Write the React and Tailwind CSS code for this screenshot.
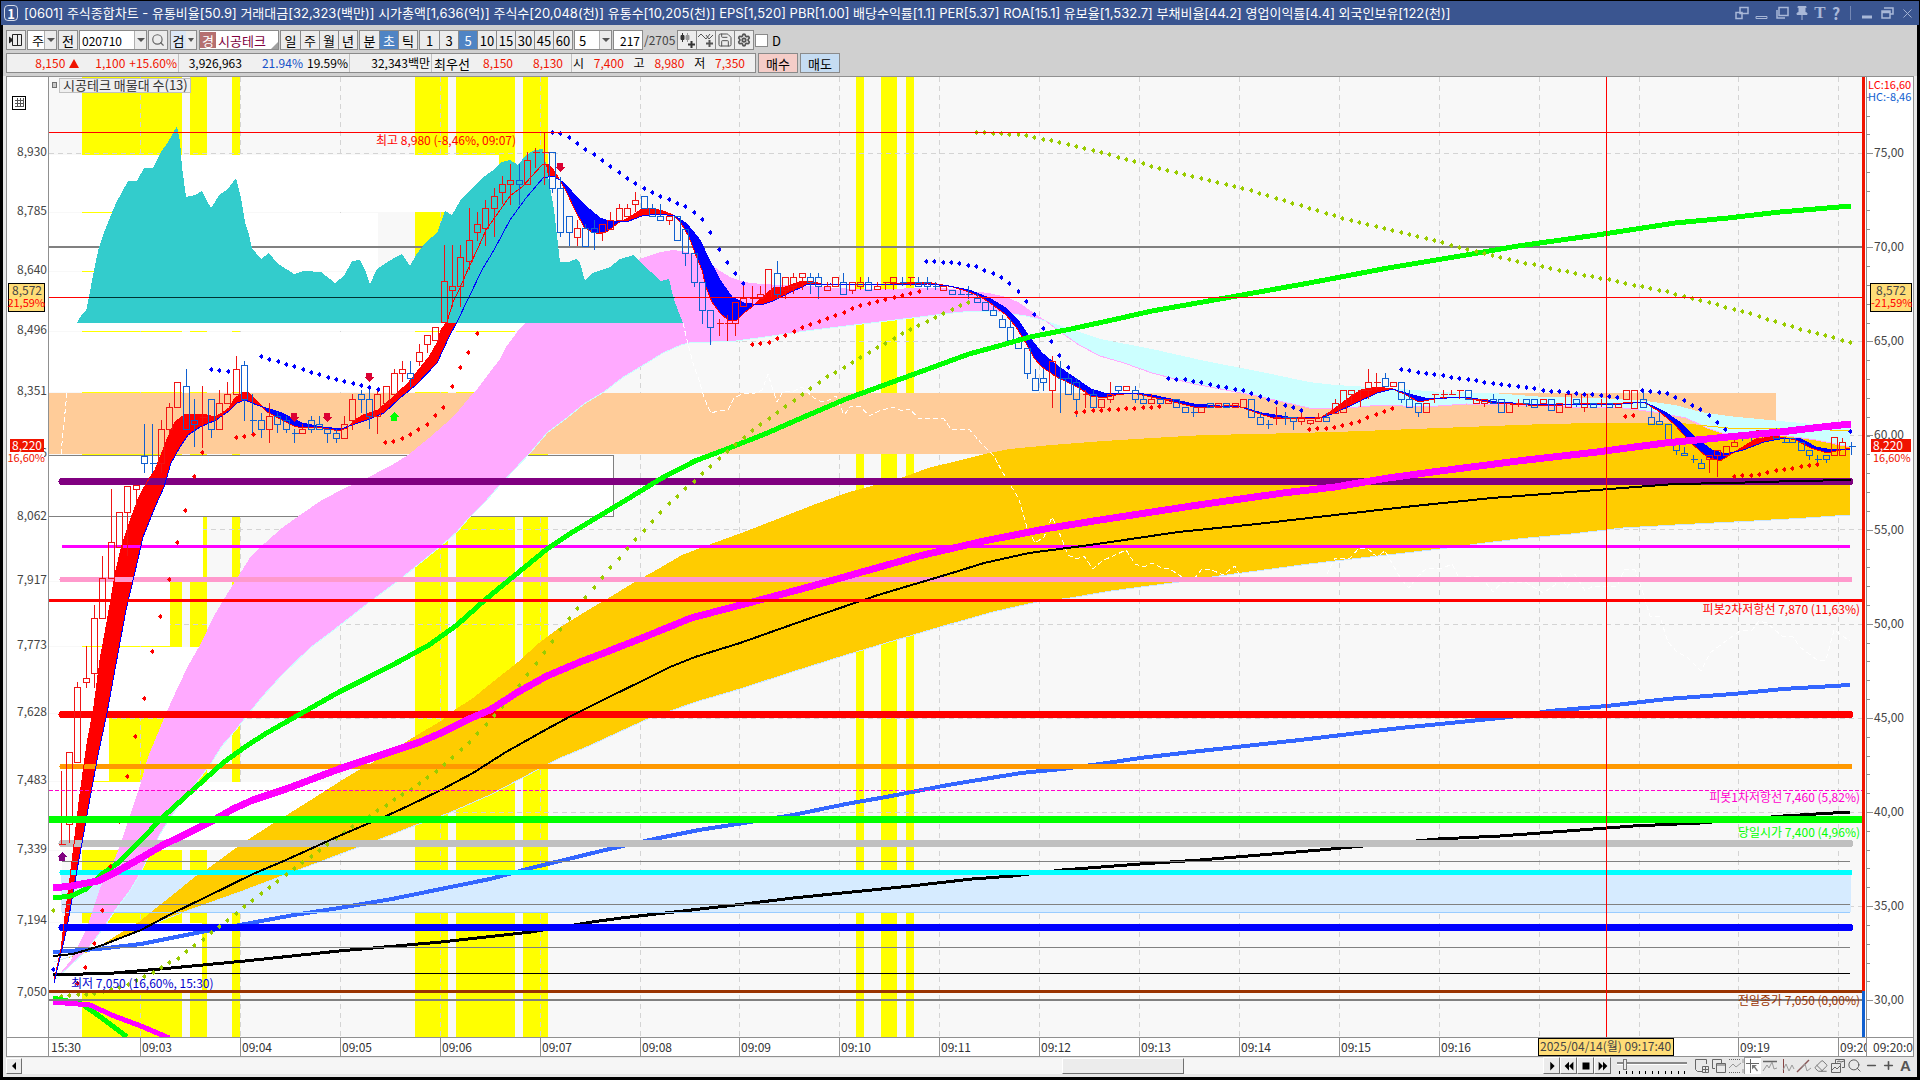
import { Search, Save, Settings, Pin, X, Minus, Plus, Eraser } from "lucide-react";
import clsx from "clsx";

const FONT = "font-['Noto_Sans_CJK_KR',sans-serif]";

/* ---------- chart data (svg user units) ---------- */

const BAR0 = 53;
const STEP = 8.325;

const YELLOW = [[82, 182], [190, 207], [232, 240], [415, 448], [456, 515], [523, 548], [856, 864], [881, 897], [906, 914]];

// volume profile rows: top, bottom, right edge
const PROFILE = [
  [155, 212, 499], [213, 271, 378], [272, 331, 530], [332, 392, 530],
  [517, 581, 203], [582, 646, 170], [647, 713, 250], [714, 781, 109],
  [782, 850, 330], [851, 922, 62], [923, 991, 202],
];

const PRICES = [
  ["8,930", 152], ["8,785", 211], ["8,640", 270], ["8,496", 330], ["8,351", 391], ["8,206", 453], ["8,062", 516],
  ["7,917", 580], ["7,773", 645], ["7,628", 712], ["7,483", 780], ["7,339", 849], ["7,194", 920], ["7,050", 992],
];

const TEAL =
  "77,323 82,314 86,311 89,297 94,270 99,247 105,230 111,215 116,203 122,192 128,181 137,181 144,168 153,168 161,152 168,142 177,126 180,142 182,167 186,197 195,195 202,191 207,201 211,208 220,194 227,190 236,178 241,198 245,222 249,235 252,248 261,259 269,253 277,263 294,274 304,271 321,272 335,283 344,276 352,261 360,260 365,270 370,284 377,269 386,263 394,258 402,254 410,266 416,255 426,242 437,233 445,211 452,215 460,201 471,189 482,178 492,171 502,162 510,160 518,165 526,155 535,150 543,149 547,170 554,210 560,262 569,262 576,259 580,263 585,281 592,273 610,267 620,259 634,255 640,262 661,281 669,279 674,300 683,323";

const GHOST =
  "683,323 687,340 693,363 700,383 704,398 711,413 718,411 728,410 734,398 744,393 755,393 762,390 768,374 772,387 777,402 783,391 794,391 802,387 814,398 822,402 829,400 836,396 844,415 851,406 861,407 869,416 879,411 893,407 902,411 910,409 918,418 944,419 951,429 969,429 981,443 993,455 1006,478 1019,499 1027,528 1035,543 1044,537 1052,517 1059,532 1068,555 1077,559 1084,556 1093,569 1102,561 1126,550 1135,564 1144,567 1152,563 1162,568 1170,569 1182,577 1194,579 1202,569 1210,569 1223,575 1235,566 1241,578 1325,578 1335,558 1350,558 1359,548 1367,548 1377,557 1385,551 1401,579 1409,588 1417,577 1427,568 1443,568 1452,564 1460,580 1468,576 1480,576 1493,592 1502,582 1525,582 1543,593 1555,585 1560,573 1567,588 1575,574 1585,591 1593,586 1617,586 1625,569 1635,570 1642,590 1650,616 1660,617 1668,642 1677,652 1687,657 1701,671 1710,653 1723,643 1740,631 1752,630 1759,621 1767,623 1782,636 1793,637 1800,647 1817,660 1826,660 1834,630 1850,641";

const PINK_TOP =
  "54,981 71,960 87,928 100,888 112,866 122,840 131,813 141,782 148,757 155,740 167,711 178,687 188,666 200,645 214,616 229,591 241,572 251,556 265,543 282,528 300,515 322,500 345,488 363,480 392,465 408,455 429,438 445,424 459,410 469,398 478,388 490,372 500,359 506,347 515,335 520,328 526,323 640,259 651,255 661,252 673,250 687,252 700,257 712,265 720,271 732,278 744,282 761,284 781,285 806,286 822,287 855,289 887,289 920,288 944,288 969,291 989,293 1006,297 1018,302 1034,313 1046,321";
const PINK_LOW =
  "54,981 86,951 102,930 114,912 131,889 141,872 153,847 163,829 175,811 188,794 200,778 210,765 222,746 235,731 249,713 263,696 282,675 310,648 339,626 367,604 398,581 424,560 441,546 457,532 469,518 486,501 500,485 514,470 531,452 547,433 563,421 584,404 604,392 622,378 642,366 663,353 681,345 693,342 712,342 736,341 765,337 806,331 846,326 887,321 920,317 953,313 973,311 989,311 1006,313 1026,316 1046,321";
const CYAN_TOP =
  "1046,321 1100,339 1152,349 1205,361 1257,371 1309,382 1335,385 1388,388 1440,392 1492,393 1545,397 1597,398 1639,400 1675,405 1701,412 1728,416 1759,419 1801,423 1850,428";
const CYAN_LOW =
  "1046,321 1059,331 1079,345 1100,356 1124,363 1152,373 1194,384 1231,391 1262,397 1283,402 1309,408 1335,409 1382,405 1424,407 1466,404 1518,405 1571,407 1623,408 1654,412 1686,418 1707,428 1722,433 1780,435 1816,440 1850,447";
const GOLD_TOP =
  "54,962 86,953 100,946 122,932 139,922 151,912 175,893 196,876 206,870 229,853 249,839 269,826 290,813 314,798 339,782 359,770 388,754 412,738 441,721 453,711 473,698 494,681 518,662 539,643 559,628 588,610 607,599 633,583 658,569 682,555 711,544 744,532 780,518 813,505 846,493 875,485 904,477 928,468 961,460 989,453 1010,449 1051,445 1104,441 1152,438 1205,435 1257,434 1335,432 1388,430 1440,428 1492,426 1545,424 1597,423 1675,423 1707,426 1728,428 1790,428 1850,431";
const GOLD_LOW =
  "54,962 102,946 139,931 163,920 184,912 240,892 298,870 322,861 359,847 378,840 416,825 449,813 490,795 539,769 560,758 589,746 617,733 650,718 670,711 699,701 740,689 789,673 846,655 886,643 940,627 993,612 1037,602 1070,598 1111,591 1172,583 1212,577 1257,571 1309,564 1361,558 1440,549 1477,544 1518,539 1571,534 1623,528 1675,525 1754,521 1806,518 1850,515";

const GREEN =
  "53,898 71,896 86,889 102,874 118,863 141,840 163,817 184,798 204,780 224,762 245,747 265,734 302,713 339,692 367,678 400,661 429,645 457,625 486,599 514,576 547,549 571,533 596,518 626,500 662,478 695,461 724,450 765,434 806,416 846,399 887,384 928,369 969,354 1002,345 1030,337 1071,329 1112,320 1152,311 1231,297 1309,283 1388,268 1466,255 1518,246 1597,235 1675,223 1728,218 1780,212 1851,206";
const MAGENTA =
  "53,888 71,886 98,881 118,871 141,858 163,845 180,837 212,821 233,809 253,800 286,789 339,769 375,757 420,742 441,733 469,719 490,710 518,692 547,676 580,662 604,653 642,638 691,618 756,601 805,588 862,572 919,556 984,541 1050,528 1100,520 1152,512 1205,504 1283,493 1335,487 1388,478 1440,471 1518,461 1597,452 1665,443 1728,437 1780,432 1822,427 1851,424";
const BLACK =
  "53,956 73,954 100,946 141,930 171,914 204,898 253,874 286,860 339,836 367,824 384,817 408,806 441,790 473,773 506,752 547,729 571,716 609,697 642,681 670,667 695,657 740,643 805,620 878,595 952,573 984,563 1029,553 1090,545 1131,539 1178,532 1257,524 1335,515 1414,506 1492,498 1571,492 1623,488 1675,484 1728,483 1796,481 1851,480";
const BLUE =
  "53,952 98,949 141,944 196,933 245,924 294,915 339,908 392,899 441,889 490,879 531,868 560,861 601,851 654,839 699,830 744,823 793,815 846,804 886,797 948,785 1021,773 1062,769 1107,763 1140,758 1200,751 1300,740 1400,728 1440,724 1510,717 1550,711 1607,706 1667,699 1733,694 1783,689 1850,685";
const BLACK_LOW =
  "53,975 114,973 171,968 245,961 339,951 441,942 531,932 592,922 621,918 674,912 744,904 793,898 862,891 911,886 972,879 1013,876 1062,870 1140,864 1200,860 1320,850 1438,839 1500,836 1567,831 1633,826 1700,823 1783,816 1850,812";

const FAST =
  "54,981 61,949 65,916 70,878 75,836 80,794 87,744 94,706 100,660 107,622 116,570 122,545 131,518 139,497 147,482 155,470 161,455 168,437 175,422 184,415 196,414 204,414 214,417 222,413 229,408 235,398 244,392 249,393 259,403 267,412 282,420 294,426 302,428 318,427 339,431 347,428 355,420 363,415 378,410 392,398 408,383 420,368 429,357 437,343 441,330 447,322 453,302 459,290 469,267 478,248 486,230 498,213 510,196 522,187 531,177 543,164 549,165 555,172 561,182 567,193 575,210 584,227 592,232 600,234 608,231 618,223 630,217 642,209 651,208 663,211 673,215 681,223 689,237 695,253 702,270 706,287 712,302 720,313 728,320 736,321 744,313 753,306 765,295 773,288 785,287 802,281 810,281 822,284 846,284 879,285 912,282 932,283 953,287 969,292 981,297 993,305 1006,315 1016,327 1026,343 1034,358 1042,367 1055,376 1067,382 1079,388 1091,396 1104,398 1116,395 1132,393 1152,397 1178,403 1194,407 1210,407 1236,405 1257,413 1273,418 1299,419 1320,418 1330,412 1346,400 1361,390 1377,387 1393,389 1406,395 1419,402 1440,398 1461,397 1492,403 1545,406 1597,403 1623,403 1644,402 1660,412 1675,425 1691,443 1707,457 1720,461 1733,453 1754,440 1775,436 1796,440 1811,448 1827,453 1850,448";
const SLOW =
  "54,983 67,928 77,870 84,832 90,798 98,755 107,713 116,664 126,610 135,572 143,537 155,507 164,487 171,463 180,447 188,435 200,427 216,420 229,411 237,403 245,400 257,405 282,413 302,423 322,427 341,429 355,424 367,420 384,413 400,398 416,385 437,363 449,337 457,322 469,297 482,270 494,250 510,220 526,198 543,178 553,176 563,182 575,195 588,208 600,218 612,222 629,221 642,216 659,214 675,216 687,224 700,240 708,257 720,280 732,297 744,303 761,305 773,301 789,293 806,285 830,284 887,285 928,284 949,286 969,290 989,298 1006,308 1018,320 1030,338 1042,353 1059,367 1075,378 1091,389 1104,393 1124,393 1144,394 1152,395 1194,404 1220,406 1241,407 1262,413 1288,417 1320,418 1335,413 1356,403 1377,393 1393,389 1409,394 1429,399 1466,397 1497,402 1545,405 1623,404 1644,402 1665,412 1681,423 1696,438 1712,450 1725,454 1743,450 1764,442 1785,438 1801,439 1816,447 1832,450 1850,449";

const SAR = [
  { color: "#0000ff", runs: ["53,969 53,969", "211,369 228,371", "261,356 294,366 327,377 378,389", "552,132 560,133 568,137 584,148 602,160 618,172 642,187 661,196 685,206 693,212 702,219 710,232 718,248 727,262 735,273 744,284", "926,261 951,262 975,266 1001,277 1010,283 1018,291 1026,301 1034,314 1043,329 1051,341 1059,355 1068,368", "1168,378 1184,379 1225,387 1244,390 1267,399 1284,405 1302,410", "1401,369 1466,379 1545,390 1619,397", "1642,390 1667,393 1683,400 1700,409 1709,415 1717,422 1726,430", "1850,431 1850,431"] },
  { color: "#ff0000", runs: ["77,983 86,966 94,942 102,910 127,776 136,733 144,696 152,651 161,613 169,577 177,542 186,507 194,474 203,449", "236,437 244,436 253,434", "385,442 394,441 410,434 427,424 435,415 444,406 452,385 460,367 469,351 478,330", "752,344 768,342 785,335 802,327 834,315 867,303 893,297 919,291", "1076,412 1093,410 1118,409 1160,406", "1309,429 1333,427 1359,421 1377,413 1393,408", "1625,416 1634,415", "1734,476 1759,474 1782,469 1818,464"] },
  { color: "#99cc00", runs: ["53,910 53,910", "61,996 94,993 118,988 136,980 152,972 177,958 202,939 227,920 260,894 294,868 344,832 385,805 410,789 435,772 469,742 502,706 535,664 568,619 602,577 635,539 668,504 702,473 743,437 768,418 802,394 826,377 860,357 893,338 928,320 951,309 969,302", "976,132 993,133 1026,135 1059,142 1093,150 1126,159 1152,166 1205,179 1257,192 1309,208 1361,223 1414,235 1456,246 1508,259 1560,270 1607,279 1665,291 1701,300 1749,313 1801,329 1851,342"] },
];

// colour, body top, body bottom, high, low
const CANDLES = `r 844 844 771 844|r 752 824 752 843|r 687 762 682 762|r 678 682 646 688|r 618 673 605 688|r 578 618 556 618|r 542 578 489 578|r 512 547 512 547|r 486 512 486 556|r 485 489 485 507
b 456 463 424 473|b 463 463 424 473|r 429 463 420 473|r 407 429 403 433|r 382 407 382 407|b 386 429 369 429|b 420 424 399 447|r 417 417 386 448|b 399 429 399 438|r 403 429 390 429
r 394 403 382 403|r 369 394 356 394|b 365 399 361 421|b 420 420 394 433|b 420 429 413 438|r 416 429 403 443|b 416 424 412 433|b 420 429 416 433|b 433 433 429 443|r 429 433 424 433
b 420 429 416 433|b 424 429 416 429|b 429 433 429 443|b 433 438 429 443|r 424 438 416 438|r 399 420 394 430|b 394 399 390 413|b 399 416 390 429|r 394 416 390 434|r 386 403 386 403
r 373 394 369 394|r 369 373 361 382|b 373 378 361 387|r 352 361 344 366|r 335 344 335 353|r 327 340 327 340|r 281 322 245 322|r 286 290 245 307|r 257 286 245 307|r 240 261 208 270
r 224 232 212 241|r 208 228 200 246|r 196 208 188 237|r 184 192 176 204|r 180 184 164 205|b 180 184 164 205|r 160 184 152 184|r 152 152 148 168|r 152 152 132 185|b 152 188 152 193
b 188 232 177 237|b 216 232 216 246|r 228 237 220 246|b 228 246 224 246|b 228 232 220 250|r 224 232 224 241|r 220 229 212 229|r 208 220 204 220|r 208 216 204 216|r 200 204 192 212
b 196 208 196 208|b 208 216 204 216|b 216 220 204 220|r 216 220 216 225|b 216 240 216 240|b 229 253 229 266|b 253 282 253 287|b 282 310 282 324|b 310 327 310 345|r 323 323 319 336
r 323 323 315 341|r 302 323 302 336|r 298 306 285 306|r 298 298 286 307|r 294 298 286 298|r 269 297 269 297|b 273 294 261 299|r 277 290 277 299|r 277 286 273 294|r 273 277 273 290
b 277 282 273 294|b 277 286 273 299|r 286 290 282 290|r 277 286 277 286|b 282 294 273 294|r 282 290 282 294|r 282 286 277 290|b 282 290 277 290|r 286 289 282 289|r 282 282 282 290
r 277 282 277 290|b 282 282 277 286|r 277 277 277 286|b 282 286 277 286|b 282 286 277 290|b 286 286 282 290|r 286 290 286 290|b 290 294 290 294|b 294 294 290 294|b 294 294 286 299
b 298 302 293 302|b 302 310 302 310|b 310 315 306 315|b 319 327 315 327|b 327 340 319 340|b 340 348 337 348|b 348 373 348 379|b 378 390 369 390|b 378 382 369 391|r 361 390 356 408
b 378 378 361 413|b 378 394 373 394|b 382 399 378 417|r 394 394 390 408|b 394 407 390 407|r 399 407 399 407|r 394 399 382 403|b 386 390 386 394|r 386 390 386 390|b 390 399 386 403
b 399 403 394 403|r 399 403 394 403|b 399 403 399 403|r 399 403 399 403|b 399 407 399 407|b 407 412 407 412|b 412 412 407 417|r 407 412 407 412|b 403 407 403 407|r 403 407 403 407
b 403 407 403 407|r 403 407 403 407|r 399 407 399 407|b 399 417 399 417|b 417 424 412 424|b 424 424 420 429|r 417 417 407 425|b 417 417 412 425|b 417 421 417 430|r 417 421 412 425
r 420 423 420 425|r 417 421 413 421|b 417 421 413 421|r 403 413 399 413|r 390 412 390 412|r 390 394 390 403|r 390 390 390 407|r 382 390 369 399|r 382 382 373 390|b 378 386 373 386
r 382 386 382 386|b 382 399 382 403|b 399 407 390 407|b 403 412 403 417|r 403 412 403 412|r 394 394 394 403|r 394 394 390 399|r 394 394 390 394|r 390 390 390 399|b 390 399 390 399
r 399 403 399 403|r 399 403 399 407|b 399 403 394 403|b 399 412 399 412|r 403 412 403 412|r 403 403 399 407|b 399 403 399 407|b 399 407 399 407|r 399 403 399 403|b 399 410 399 410
r 403 412 403 412|r 394 407 394 407|b 399 403 399 407|r 394 407 394 412|b 403 407 403 407|r 403 403 399 407|b 403 407 403 407|r 403 407 403 407|r 390 399 390 399|r 390 408 390 408
b 399 407 390 407|b 417 424 407 424|b 421 424 412 424|b 424 442 424 442|b 442 450 442 455|b 453 455 447 455|b 459 459 455 463|b 463 468 459 468|r 455 459 455 473|r 450 455 450 477
r 446 455 446 455|r 442 446 433 446|b 433 437 433 441|b 437 437 433 441|r 430 438 430 438|r 430 434 430 434|b 433 438 428 438|b 442 442 437 442|b 438 442 438 442|b 442 450 442 450
b 450 455 450 460|b 459 459 455 463|b 455 459 455 463|r 437 455 437 455|r 442 455 438 455|b 446 446 442 455`
  .split(/[|\n]/)
  .map((row, i) => {
    const [tone, ...ys] = row.trim().split(" ");
    const [top, bottom, high, low] = ys.map(Number);
    return { x: Math.round(BAR0 + STEP * (i + 1) - 0.5) + 0.5, tone, top, bottom, high, low };
  });

const LEVELS = [
  [481.5, 7, "#800080"], [546.5, 3, "#ff00ff"], [579.5, 5, "#ff99cc"], [714.5, 7, "#ff0000"],
  [766.5, 5, "#ff9900"], [843.5, 7, "#c0c0c0"], [861.5, 1, "#808080"], [872.5, 5, "#00ffff"],
  [904.5, 1, "#808080"], [912.5, 1, "#99ccff"], [927.5, 7, "#0000ff"], [947.5, 1, "#808080"], [973.5, 1, "#000000"],
];

const parse = (s) => s.split(" ").map((p) => p.split(",").map(Number));

const at = (pts, x) => {
  const i = pts.findIndex((p) => p[0] >= x);
  if (i <= 0) return i === 0 ? pts[0][1] : pts[pts.length - 1][1];
  const [x0, y0] = pts[i - 1];
  const [x1, y1] = pts[i];
  return y0 + ((y1 - y0) * (x - x0)) / (x1 - x0);
};

const area = (a, b) => a + " " + b.split(" ").reverse().join(" ");

const dots = (run) => {
  const pts = parse(run);
  const out = [];
  for (let x = pts[0][0]; x <= pts[pts.length - 1][0] + 1; x += STEP) {
    out.push([Math.round(x) + 0.5, Math.round(at(pts, x)) + 0.5]);
  }
  return out;
};

const ribbon = () => {
  const f = parse(FAST);
  const s = parse(SLOW);
  let up = "";
  let down = "";
  for (let x = 54; x < 1850; x += 2) {
    const quad = `M${x} ${at(f, x)}L${x + 2} ${at(f, x + 2)}V${at(s, x + 2)}L${x} ${at(s, x)}Z`;
    if (at(f, x + 1) < at(s, x + 1)) up += quad;
    else down += quad;
  }
  return { up, down };
};

const RIBBON = ribbon();

// the time cursor sits over these two labels
const COVERED = [14, 15];

/* ---------- chart ---------- */

function Line({ points, color, width = 1, ...rest }) {
  return <polyline points={points} fill="none" stroke={color} strokeWidth={width} {...rest} />;
}

function Arrow({ x, y, color, up }) {
  return (
    <path
      fill={color}
      d={up ? `M${x} ${y - 5}l5 5h-2v4h-6v-4h-2z` : `M${x} ${y + 5}l5 -5h-2v-4h-6v4h-2z`}
    />
  );
}

function Chart() {
  return (
    <svg
      viewBox="6 76 1908 981"
      preserveAspectRatio="none"
      shapeRendering="crispEdges"
      className={clsx("block h-full w-full text-[12px]", FONT)}
    >
      <defs>
        <clipPath id="plot"><rect x="49" y="77" width="1813" height="960" /></clipPath>
        <clipPath id="right"><rect x="1867" y="77" width="46" height="980" /></clipPath>
        <clipPath id="time"><rect x="49" y="1037" width="1817" height="20" /></clipPath>
      </defs>
      <rect x="6" y="76" width="1908" height="981" fill="#fff" />
      <rect x="49" y="76" width="1814" height="961" fill="#f8f8f8" />

      <g clipPath="url(#plot)">
        {YELLOW.map(([a, b]) => (
          <rect key={a} x={a} y="77" width={b - a} height="960" fill="#ffff00" />
        ))}
        <g stroke="#d4d4d4" strokeDasharray="5 4">
          {Array.from({ length: 18 }, (_, i) => (
            <line key={i} x1={140.5 + i * 99.9} x2={140.5 + i * 99.9} y1="77" y2="1037" />
          ))}
          {Array.from({ length: 10 }, (_, i) => (
            <line key={i} y1={153.5 + i * 94.1} y2={153.5 + i * 94.1} x1="49" x2="1862" />
          ))}
        </g>
        {PROFILE.map(([top, bottom, right]) => (
          <rect key={top} x="49" y={top} width={right - 49} height={bottom - top} fill="#fff" />
        ))}
        <rect x="49" y="393" width="1727" height="61" fill="#ffcc99" />
        <rect x="48.5" y="455.5" width="565" height="61" fill="#fff" stroke="#808080" />
        <rect x="61" y="872" width="1790" height="40" fill="#d6ebff" />
        <line x1="49" x2="1862" y1="247" y2="247" stroke="#808080" strokeWidth="2" />

        <polygon points={area(GOLD_TOP, GOLD_LOW)} fill="#ffcc00" />
        <Line points={GOLD_LOW} color="#cce6ff" />
        <polygon points={area(PINK_TOP, PINK_LOW)} fill="#ffaaff" />
        <Line points={PINK_LOW} color="#ccffff" />
        <polygon points={area(CYAN_TOP, CYAN_LOW)} fill="#ccffff" />
        <Line points={CYAN_LOW} color="#ffaaff" />
        <Line points="1675,423 1707,426 1728,428 1790,428 1850,431" color="#ffcc00" />

        <path d={RIBBON.up} fill="#ff0000" />
        <path d={RIBBON.down} fill="#0000ff" />
        <polygon points={TEAL} fill="#33cccc" />
        <Line points={GHOST} color="#fff" strokeDasharray="5 3" />
        <Line points="61,454 67,392" color="#fff" strokeDasharray="5 3" />

        <Line points={BLACK_LOW} color="#000" width={3} />
        <Line points={BLUE} color="#3366ff" width={4} />
        {LEVELS.map(([y, w, color]) => (
          <line key={y} x1="62" x2="1850" y1={y} y2={y} stroke={color} strokeWidth={w} strokeLinecap={w > 3 ? "round" : "butt"} />
        ))}
        <Line points={FAST} color="#ff0000" />
        <Line points={SLOW} color="#0000ff" />
        {CANDLES.map((c) => {
          const color = c.tone === "r" ? "#f01414" : "#1060d0";
          return (
            <g key={c.x} stroke={color} fill="none">
              <path d={`M${c.x} ${c.high}V${c.top}M${c.x} ${c.bottom}V${c.low}`} />
              {c.top === c.bottom ? (
                <path d={`M${c.x - 3} ${c.top + 0.5}h7`} />
              ) : (
                <rect x={c.x - 3} y={c.top + 0.5} width="6" height={c.bottom - c.top} />
              )}
            </g>
          );
        })}
        <Line points={GREEN} color="#00ff00" width={5} />
        {SAR.map(({ color, runs }) =>
          runs.map((run) =>
            dots(run).map(([x, y]) => <ellipse key={`${x},${y}`} cx={x} cy={y} rx="2" ry="2.2" fill={color} />)
          )
        )}
        <Line points={MAGENTA} color="#ff00ff" width={7} />
        <Line points={BLACK} color="#000" width={2} />
        <Line points="53,998 82,1004 102,1018 127,1037" color="#00ff00" width={5} />
        <Line points="53,1002 90,1005 114,1016 141,1026 169,1038" color="#ff00ff" width={5} />

        <line x1="49" x2="1862" y1="132.5" y2="132.5" stroke="#ff0000" />
        <line x1="49" x2="1862" y1="600.5" y2="600.5" stroke="#ff0000" strokeWidth="3" />
        <line x1="49" x2="1862" y1="790.5" y2="790.5" stroke="#ff00cc" strokeDasharray="4 2" />
        <line x1="49" x2="1862" y1="819.5" y2="819.5" stroke="#00ff00" strokeWidth="7" />
        <line x1="49" x2="1862" y1="991.5" y2="991.5" stroke="#993300" strokeWidth="3" />
        <line x1="49" x2="1862" y1="1000" y2="1000" stroke="#808080" strokeWidth="2" />

        <Arrow x={294} y={417} color="#dc0032" />
        <Arrow x={327} y={417} color="#dc0032" />
        <Arrow x={369} y={377} color="#dc0032" />
        <Arrow x={560} y={167} color="#dc0032" />
        <Arrow x={394} y={417} color="#00ff00" up />
        <Arrow x={62} y={857} color="#800080" up />

        <line x1="49" x2="1862" y1="297.5" y2="297.5" stroke="#ff0000" />
        <line x1="89" x2="675" y1="297.5" y2="297.5" stroke="#003333" />
        <line x1="1606.5" x2="1606.5" y1="77" y2="1037" stroke="#ff0000" />

        <text x="376" y="145" fill="#ff0000">최고 8,980 (-8,46%, 09:07)</text>
        <text x="71" y="988" fill="#0000cc">최저 7,050 (16,60%, 15:30)</text>
        <g textAnchor="end">
          <text x="1860" y="614" fill="#ff0000">피봇2차저항선 7,870 (11,63%)</text>
          <text x="1860" y="802" fill="#ff00cc">피봇1차저항선 7,460 (5,82%)</text>
          <text x="1860" y="837" fill="#00ff00">당일시가 7,400 (4,96%)</text>
          <text x="1860" y="1005" fill="#993300">전일종가 7,050 (0,00%)</text>
        </g>

        <rect x="52.5" y="82.5" width="4" height="5" fill="#c8c8c8" stroke="#707070" />
        <rect x="59.5" y="78.5" width="131" height="14" fill="#f0f0f0" stroke="#c0c0c0" />
        <text x="63" y="90" fill="#333" className="text-[13px]">시공테크 매물대 수(13)</text>
      </g>

      {/* left price scale */}
      <g fill="none" stroke="#000">
        <rect x="12.5" y="96.5" width="13" height="13" strokeWidth="1" />
        <path d="M15 100h9M15 103h9M15 106h9M17 98v9M20 98v9M23 98v9" stroke="#555" />
      </g>
      {PRICES.map(([label, y]) => (
        <text key={label} x="47" y={y + 4} textAnchor="end" fill="#444">{label}</text>
      ))}
      <rect x="10" y="439" width="34" height="13" fill="#f01400" />
      <rect x="8" y="452" width="36" height="13" fill="#fff" />
      <rect x="8.5" y="283.5" width="36" height="28" fill="#ffdd77" stroke="#000" />
      <text x="12" y="450" fill="#fff">8,220</text>
      <text x="12" y="295" fill="#444">8,572</text>
      <g className="text-[11px]" textAnchor="end">
        <text x="45" y="462" fill="#f01400">16,60%</text>
        <text x="45" y="307" fill="#ff0000">21,59%</text>
      </g>

      {/* right oscillator scale */}
      {Array.from({ length: 50 }, (_, i) => (
        <path key={i} d={`M1867 ${Math.round(1037 - 18 - i * 18.82) + 0.5}h3`} stroke="#909090" />
      ))}
      {Array.from({ length: 10 }, (_, i) => {
        const y = Math.round(1000 - i * 94.1);
        return (
          <g key={i}>
            <path d={`M1867 ${y + 0.5}h6`} stroke="#909090" />
            <text x="1874" y={y + 4} fill="#444">{`${30 + i * 5},00`}</text>
          </g>
        );
      })}
      <rect x="1871" y="439" width="40" height="13" fill="#f01400" />
      <rect x="1871" y="452" width="40" height="12" fill="#fff" />
      <rect x="1870.5" y="283.5" width="41" height="28" fill="#ffdd77" stroke="#000" />
      <g clipPath="url(#right)">
        <g className="text-[11px]">
          <text x="1868" y="89" fill="#ff0000">LC:16,60</text>
          <text x="1868" y="101" fill="#1060d0">HC:-8,46</text>
          <text x="1871" y="307" fill="#ff0000">-21,59%</text>
          <text x="1873" y="462" fill="#f01400">16,60%</text>
        </g>
        <text x="1876" y="295" fill="#444">8,572</text>
        <text x="1873" y="450" fill="#fff">8,220</text>
        <text x="1873" y="1052" fill="#333">09:20:0</text>
      </g>
      <rect x="1862" y="77" width="3" height="914" fill="#f01400" />
      <rect x="1862" y="991" width="3" height="46" fill="#1060d0" />

      {/* time scale */}
      <g clipPath="url(#time)" fill="#333">
        <text x="51" y="1052">15:30</text>
        {Array.from({ length: 18 }, (_, i) => (
          <g key={i}>
            <path d={`M${Math.round(140 + i * 99.9) + 0.5} 1037v19`} stroke="#909090" />
            {!COVERED.includes(i) && (
              <text x={Math.round(142 + i * 99.9)} y="1052">{`09:${String(i + 3).padStart(2, "0")}`}</text>
            )}
          </g>
        ))}
      </g>
      <rect x="1538.5" y="1038.5" width="135" height="17" fill="#ffdd77" stroke="#000" />
      <text x="1540" y="1051" fill="#444">2025/04/14(월) 09:17:40</text>

      <path
        d="M6 76.5H1914M6 1037.5H1914M6 1056.5H1914M6.5 76V1057M48.5 76V1057M1866.5 76V1057M1913.5 76V1057"
        stroke="#909090"
        fill="none"
      />
    </svg>
  );
}

/* ---------- title bar ---------- */

function GlyphButton({ label, children }) {
  return (
    <button aria-label={label} className="flex h-4 w-5 items-center justify-center">
      <svg viewBox="0 0 14 14" className="size-3.5" fill="none" stroke="currentColor" strokeWidth="1.5">{children}</svg>
    </button>
  );
}

function TitleBar() {
  return (
    <header className="mx-px flex h-6 shrink-0 items-center bg-[#3a5590] pl-[3px] text-[13px] text-white">
      <span className="mr-1.5 flex h-4 w-3.5 items-center justify-center rounded-sm border border-white/80 text-[13px] leading-none font-bold">1</span>
      <h1 className="flex-1 truncate font-['Inter','Noto_Sans_CJK_KR',sans-serif] text-[13px] leading-6">
        [0601] 주식종합차트 - 유통비율[50.9] 거래대금[32,323(백만)] 시가총액[1,636(억)] 주식수[20,048(천)] 유통수[10,205(천)] EPS[1,520] PBR[1.00] 배당수익률[1.1] PER[5.37] ROA[15.1] 유보율[1,532.7] 부채비율[44.2] 영업이익률[4.4] 외국인보유[122(천)]
      </h1>
      <div className="flex items-center pr-0.5 text-[#a9b8d8]">
        <GlyphButton label="창 분리"><path d="M5 1.5h8v6H5zM1 6.5h6v6H1z" /></GlyphButton>
        <GlyphButton label="접기"><path d="M1 10.5h11v2h-11z" strokeWidth="1" /></GlyphButton>
        <GlyphButton label="복사"><path d="M4 1.5h9v8H4zM2 4v8h8" /></GlyphButton>
        <GlyphButton label="고정"><path d="M3 0.5h8v1l-1 1v3l2 2v1H2v-1l2-2v-3l-1-1zM7 8v6" fill="currentColor" strokeWidth="1" /></GlyphButton>
        <button aria-label="글꼴" className="w-4 font-['Liberation_Serif',serif] text-[17px] leading-4 font-bold">T</button>
        <button aria-label="도움말" className="w-4 text-[16px] leading-4 font-bold">?</button>
        <span className="mx-1.5 h-3.5 w-px bg-[#7588b4]" />
        <GlyphButton label="최소화"><path d="M2 11h10" strokeWidth="3" /></GlyphButton>
        <GlyphButton label="이전 크기"><path d="M4 2h9v6h-3M2 5h8v7H2zM2 6.5h8" /></GlyphButton>
        <button aria-label="닫기" className="flex w-5 justify-center"><X size={15} strokeWidth={1.5} /></button>
      </div>
    </header>
  );
}

/* ---------- toolbar ---------- */

const tool = "flex h-5 items-center justify-center border border-[#8a8a8a] bg-[#ececec]";

function Combo({ label, value, className }) {
  return (
    <div className={clsx("relative h-5 border border-[#8a8a8a] bg-white", className)}>
      <select aria-label={label} className="h-full w-full appearance-none pl-1 pr-3 leading-none outline-none">
        <option>{value}</option>
      </select>
      <span className="pointer-events-none absolute inset-y-0 right-0 flex w-3 items-center justify-center border-l border-[#b0b0b0] bg-[#ececec]">
        <i className="border-x-[4px] border-t-[4px] border-x-transparent border-t-[#555]" />
      </span>
    </div>
  );
}

function Segments({ items, active }) {
  return (
    <div className="flex h-5 border border-[#8a8a8a]">
      {items.map((item, i) => (
        <button
          key={item}
          className={clsx(
            "flex w-[19px] items-center justify-center",
            i > 0 && "border-l border-[#8a8a8a]",
            item === active ? "bg-[#4f84c4] text-white" : "bg-[#ececec]"
          )}
        >
          {item}
        </button>
      ))}
    </div>
  );
}

function Toolbar() {
  return (
    <div className="flex h-5 items-center gap-px px-[3px] text-[13px] leading-none">
      <button aria-label="패널" className={clsx(tool, "w-5")}>
        <svg viewBox="0 0 14 14" className="size-3.5" fill="none" stroke="#222"><path d="M3.5 1.5h9v11h-9zM8.5 1.5v11" /><path d="M0 4l4 3-4 3z" fill="#222" /></svg>
      </button>
      <Combo label="구분" value="주" className="w-[30px]" />
      <button className={clsx(tool, "w-5")}>전</button>
      <div className="flex h-5 w-[68px] items-center border border-[#8a8a8a] bg-white">
        <input aria-label="종목코드" defaultValue="020710" className="w-[54px] pl-0.5 text-[12px] outline-none" />
        <span className="flex h-full flex-1 items-center justify-center border-l border-[#b0b0b0] bg-[#ececec]">
          <i className="border-x-[4px] border-t-[4px] border-x-transparent border-t-[#555]" />
        </span>
      </div>
      <button aria-label="종목 검색" className={clsx(tool, "w-5 text-[#666]")}><Search size={14} strokeWidth={2} /></button>
      <button className={clsx(tool, "ml-px w-[27px]")}>
        <span className="flex h-full flex-1 items-center justify-center bg-[#dce8f6]">검</span>
        <span className="flex w-2.5 justify-center"><i className="border-x-[3px] border-t-[4px] border-x-transparent border-t-[#555]" /></span>
      </button>
      <div className="relative ml-px flex h-5 w-[80px] items-center border border-[#8a8a8a] bg-white text-[#800040]">
        <span className="mr-0.5 flex h-4 w-4 items-center justify-center bg-[#b57070] text-[13px] text-white">경</span>
        시공테크
        <i className="absolute right-0 bottom-0 border-b-[7px] border-l-[7px] border-b-[#a0a0a0] border-l-transparent" />
      </div>
      <Segments items={["일", "주", "월", "년"]} />
      <Segments items={["분", "초", "틱"]} active="초" />
      <Segments items={["1", "3", "5", "10", "15", "30", "45", "60"]} active="5" />
      <Combo label="주기" value="5" className="w-[38px]" />
      <input aria-label="조회 봉수" defaultValue="217" className="h-5 w-[30px] border border-[#8a8a8a] bg-white pr-0.5 text-right text-[12px] outline-none" />
      <span className="w-8 text-[12px] text-[#444]">/2705</span>
      <div className="flex">
        <button aria-label="차트 추가" className={clsx(tool, "w-5")}>
          <svg viewBox="0 0 16 16" className="size-4" stroke="#333" fill="#333"><path d="M3.5 1v9M2 3.5h3v4H2z" /><path d="M8.5 1v9M7 3.5h3v4H7z" stroke="#999" fill="#999" /><path d="M12.5 9v7M9 12.5h7" strokeWidth="2" /></svg>
        </button>
        <button aria-label="지표 추가" className={clsx(tool, "-ml-px w-5")}>
          <svg viewBox="0 0 16 16" className="size-4" stroke="#555" fill="none"><path d="M0 5l3-3 5 5 4-5M8 3l3 4 4-4" /><path d="M11.5 8v7M8 11.5h7" strokeWidth="2" /></svg>
        </button>
        <button aria-label="저장" className={clsx(tool, "-ml-px w-5 text-[#555]")}><Save size={16} strokeWidth={1.5} /></button>
        <button aria-label="설정" className={clsx(tool, "-ml-px w-5 text-[#555]")}><Settings size={14} strokeWidth={3} /></button>
      </div>
      <label className="flex items-center gap-1">
        <input type="checkbox" className="size-[13px] appearance-none border border-[#8a8a8a] bg-white" />
        D
      </label>
    </div>
  );
}

function QuoteBar() {
  return (
    <div className="flex h-5 items-center gap-0.5 px-[3px] text-[12px] leading-none">
      <div className="flex h-5 w-[750px] items-center border border-[#8a8a8a] bg-[#f0f0f0] whitespace-pre">
        <div className="flex h-full w-[172px] items-center justify-end gap-1 border-r border-[#c0c0c0] pr-px text-[#f01400]">
          <span>8,150</span>
          <i className="mr-3 border-x-[5px] border-b-[9px] border-x-transparent border-b-[#f01400]" />
          <span>1,100</span>
          <span>+15.60%</span>
        </div>
        <div className="flex h-full w-[171px] items-center justify-end gap-1 border-r border-[#c0c0c0] pr-px">
          <span className="mr-4">3,926,963</span>
          <span className="text-[#1450c8]">21.94%</span>
          <span>19.59%</span>
        </div>
        <div className="flex h-full w-[82px] items-center justify-end border-r border-[#c0c0c0] pr-px">32,343백만</div>
        <div className="flex h-full w-[140px] items-center border-r border-[#c0c0c0] pl-0.5">
          <span className="flex-1 text-[13px]">최우선</span>
          <span className="mr-5 text-[#f01400]">8,150</span>
          <span className="mr-2 text-[#f01400]">8,130</span>
        </div>
        <dl className="flex flex-1 items-center justify-between pr-2.5 pl-px">
          <dt>시</dt><dd className="text-[#f01400]">7,400</dd>
          <dt>고</dt><dd className="text-[#f01400]">8,980</dd>
          <dt>저</dt><dd className="text-[#f01400]">7,350</dd>
        </dl>
      </div>
      <button className="h-5 w-10 border border-[#8a8a8a] bg-[#f5cdc8] text-[13px]">매수</button>
      <button className="h-5 w-10 border border-[#8a8a8a] bg-[#c5dcf2] text-[13px]">매도</button>
    </div>
  );
}

/* ---------- bottom strip ---------- */

const raised = "border border-t-white border-l-white border-r-[#707070] border-b-[#707070] bg-[#ececec]";

function IconTool({ label, pressed, children }) {
  return (
    <button aria-label={label} className={clsx("flex h-[17px] w-[17px] items-center justify-center", pressed && "border-t border-l border-[#999] bg-white")}>
      <svg viewBox="0 0 16 16" className="size-4" fill="none" stroke="#666">{children}</svg>
    </button>
  );
}

function BottomBar() {
  return (
    <div className="flex h-[17px] shrink-0 items-center">
      <button aria-label="왼쪽으로" className={clsx("flex h-4 w-4 items-center justify-center", raised)}>
        <i className="border-y-[4px] border-r-[4px] border-y-transparent border-r-black" />
      </button>
      <div className="h-4 flex-1 bg-[#f6f6f6]">
        <div className={clsx("ml-[68.4%] h-4 w-[8%]", raised)} />
      </div>
      {[
        ["재생", "M6 3v10l5-5z"],
        ["되감기", "M8 3v10L3 8zM13 3v10L8 8z"],
        ["정지", "M4 4h8v8H4z"],
        ["빨리감기", "M3 3v10l5-5zM8 3v10l5-5z"],
      ].map(([label, d]) => (
        <button key={label} aria-label={label} className={clsx("flex h-[17px] w-[17px] items-center justify-center", raised)}>
          <svg viewBox="0 0 16 16" className="size-3.5"><path d={d} fill="#000" /></svg>
        </button>
      ))}
      <label className="relative mx-1.5 block h-4 w-[70px]">
        <svg viewBox="0 0 70 16" className="size-full" shapeRendering="crispEdges">
          <path d="M0 4.5h70" stroke="#888" strokeWidth="2" />
          <path d="M0 6.5h70" stroke="#fff" />
          {Array.from({ length: 11 }, (_, i) => <path key={i} d={`M${2.5 + i * 6.5} 13v3`} stroke="#000" />)}
          <rect x="6.5" y="1.5" width="3" height="10" fill="#ececec" stroke="#777" />
        </svg>
        <input type="range" aria-label="재생 속도" defaultValue="10" className="absolute inset-0 w-full opacity-0" />
      </label>
      <IconTool label="차트 추가"><path d="M9 13.5H3.5l-2-2v-10h11V6M8.5 8.5h6v6h-6zM11.5 9v6M9 11.5h6" /></IconTool>
      <IconTool label="창 겹치기"><path d="M4 10.5H1.5v-9h9V5M5.5 5.5h9v9h-9zM5.5 7h9" /></IconTool>
      <IconTool label="구간 선택"><path d="M1 1.5h12M1 14.5h12" strokeDasharray="1 1" /><path d="M1 10l4-4 3 3 5-4M15 1v4M15 11v4" stroke="#999" /></IconTool>
      <IconTool label="십자선" pressed><path d="M1 5.5h13M5.5 1v14" /><path d="M7 7h5l-2 1.5 3 4-1 1-3-4-2 2z" fill="#777" stroke="none" /></IconTool>
      <IconTool label="수평선"><path d="M1 3.5h14" strokeWidth="1.5" /><path d="M1 13l4-6 2 3 3-6 2 7 3-1" stroke="#999" /></IconTool>
      <IconTool label="수직선"><path d="M4.5 1v14" stroke="#844" /><path d="M4 12l3-6 3 7 3-6 2 4" stroke="#999" /></IconTool>
      <IconTool label="추세선"><path d="M1 14L13 2" stroke="#855" strokeWidth="1.5" /><path d="M5 11l4-5 2 7 4-3" stroke="#999" /></IconTool>
      <button aria-label="모두 지우기" className="flex size-[17px] items-center justify-center text-[#666]">
        <Eraser size={14} strokeWidth={1.5} />
      </button>
      <IconTool label="차트 복사"><path d="M5.5 5V1.5h9v8H12M1.5 5.5h9v9h-9z" /><path d="M2 12l3-3 2 2 3-3M7 4l2-1 2 1 3-1" /></IconTool>
      <button aria-label="확대경" className="flex size-[17px] items-center justify-center text-[#555]"><Search size={15} strokeWidth={1.5} /></button>
      <button aria-label="축소" className="flex size-[17px] items-center justify-center text-[#555]"><Minus size={13} strokeWidth={3} /></button>
      <button aria-label="확대" className="flex size-[17px] items-center justify-center text-[#555]"><Plus size={13} strokeWidth={3} /></button>
      <button aria-label="자동" className="w-[17px] font-['Liberation_Sans',sans-serif] text-[15px] leading-none font-bold text-[#555]">A</button>
    </div>
  );
}

export default function App() {
  return (
    <div className={clsx("flex h-screen flex-col overflow-hidden bg-black pt-px text-black", FONT)}>
      <TitleBar />
      <main className="mx-[3px] mb-[3px] flex min-h-0 flex-1 flex-col bg-[#d0d0d0] pt-[5px]">
        <div className="flex shrink-0 flex-col gap-[3px] pb-[3px]">
          <Toolbar />
          <QuoteBar />
        </div>
        <div className="flex min-h-0 flex-1 flex-col bg-[#e8e8e8] px-[3px] pb-[3px]">
          <div className="min-h-0 flex-1">
            <Chart />
          </div>
          <BottomBar />
        </div>
      </main>
    </div>
  );
}
